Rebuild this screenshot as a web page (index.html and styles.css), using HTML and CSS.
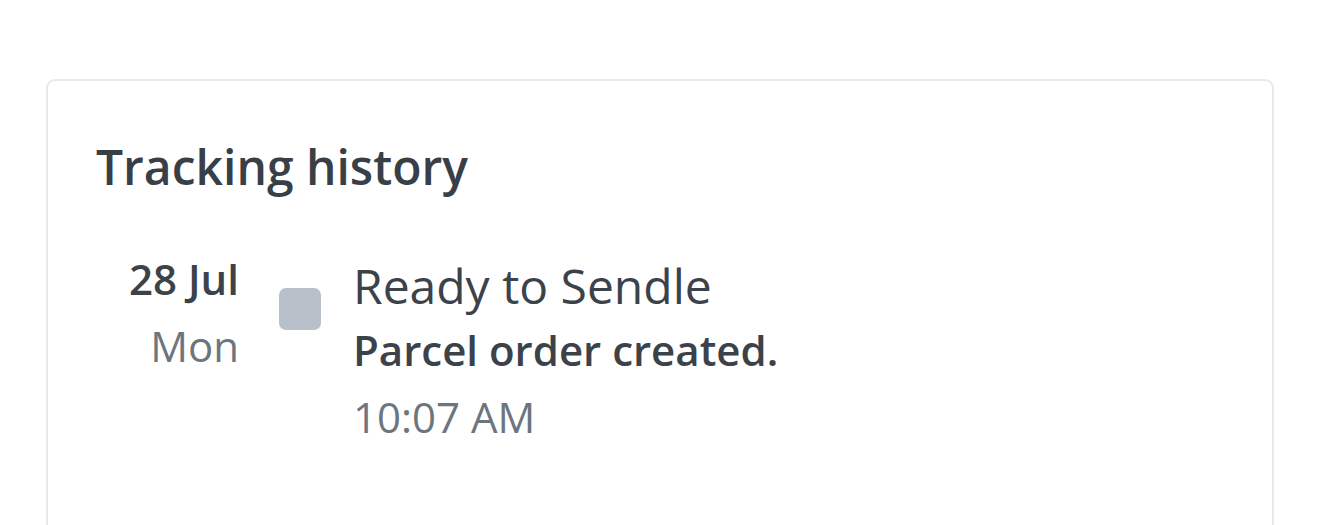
FILE: index.html
```html
<!DOCTYPE html>
<html>
<head lang="en">
    <meta charset="UTF-8">
    <title>Tracking history</title>
    <link rel="stylesheet" href="styles.css">
</head>
<body>
    <div class="card">
        <h2 class="card-title">Tracking history</h2>
        <ul class="history">
            <li class="event">
                <div class="event-date">
                    <span class="day">28 Jul</span>
                    <span class="weekday">Mon</span>
                </div>
                <div class="event-marker"><span class="dot"></span></div>
                <div class="event-body">
                    <span class="status">Ready to Sendle</span>
                    <span class="desc">Parcel order created.</span>
                    <span class="time">10:07 AM</span>
                </div>
            </li>
        </ul>
    </div>
</body>
</html>
```

FILE: styles.css
```css
*{
    margin: 0;
    padding: 0;
    box-sizing: border-box;
}
ul{
    list-style: none;
}
html, body{
    background: #fff;
}
body{
    font-family: "Open Sans", "Noto Sans", sans-serif;
    color: #3b424a;
    padding: 79px 46px 0 46px;
    width: 1320px;
    height: 525px;
    overflow: hidden;
}
.card{
    border: 2px solid #e9e9eb;
    border-radius: 9px;
    height: 600px;
    width: 1228px;
    padding: 56px 48px 0 48px;
}
.card-title{
    font-size: 48px;
    font-weight: 600;
    line-height: 60px;
    color: #383f47;
}
.history{
    margin-top: 57px;
}
.event{
    display: flex;
    align-items: flex-start;
}
.event-date{
    width: 143px;
    display: flex;
    flex-direction: column;
    align-items: flex-end;
}
.day{
    font-size: 42px;
    font-weight: 600;
    line-height: 50px;
}
.weekday{
    font-size: 42px;
    color: #6d757e;
    line-height: 83px;
}
.event-marker{
    width: 114px;
    padding: 34px 0 0 40px;
}
.dot{
    display: block;
    width: 42px;
    height: 42px;
    border-radius: 7px;
    background: #b8c0ca;
}
.event-body{
    display: flex;
    flex-direction: column;
}
.status{
    font-size: 48px;
    line-height: 64px;
}
.desc{
    font-size: 42px;
    font-weight: 600;
    line-height: 64px;
}
.time{
    font-size: 42px;
    color: #6d757e;
    line-height: 64px;
    margin-top: 3px;
}
```
